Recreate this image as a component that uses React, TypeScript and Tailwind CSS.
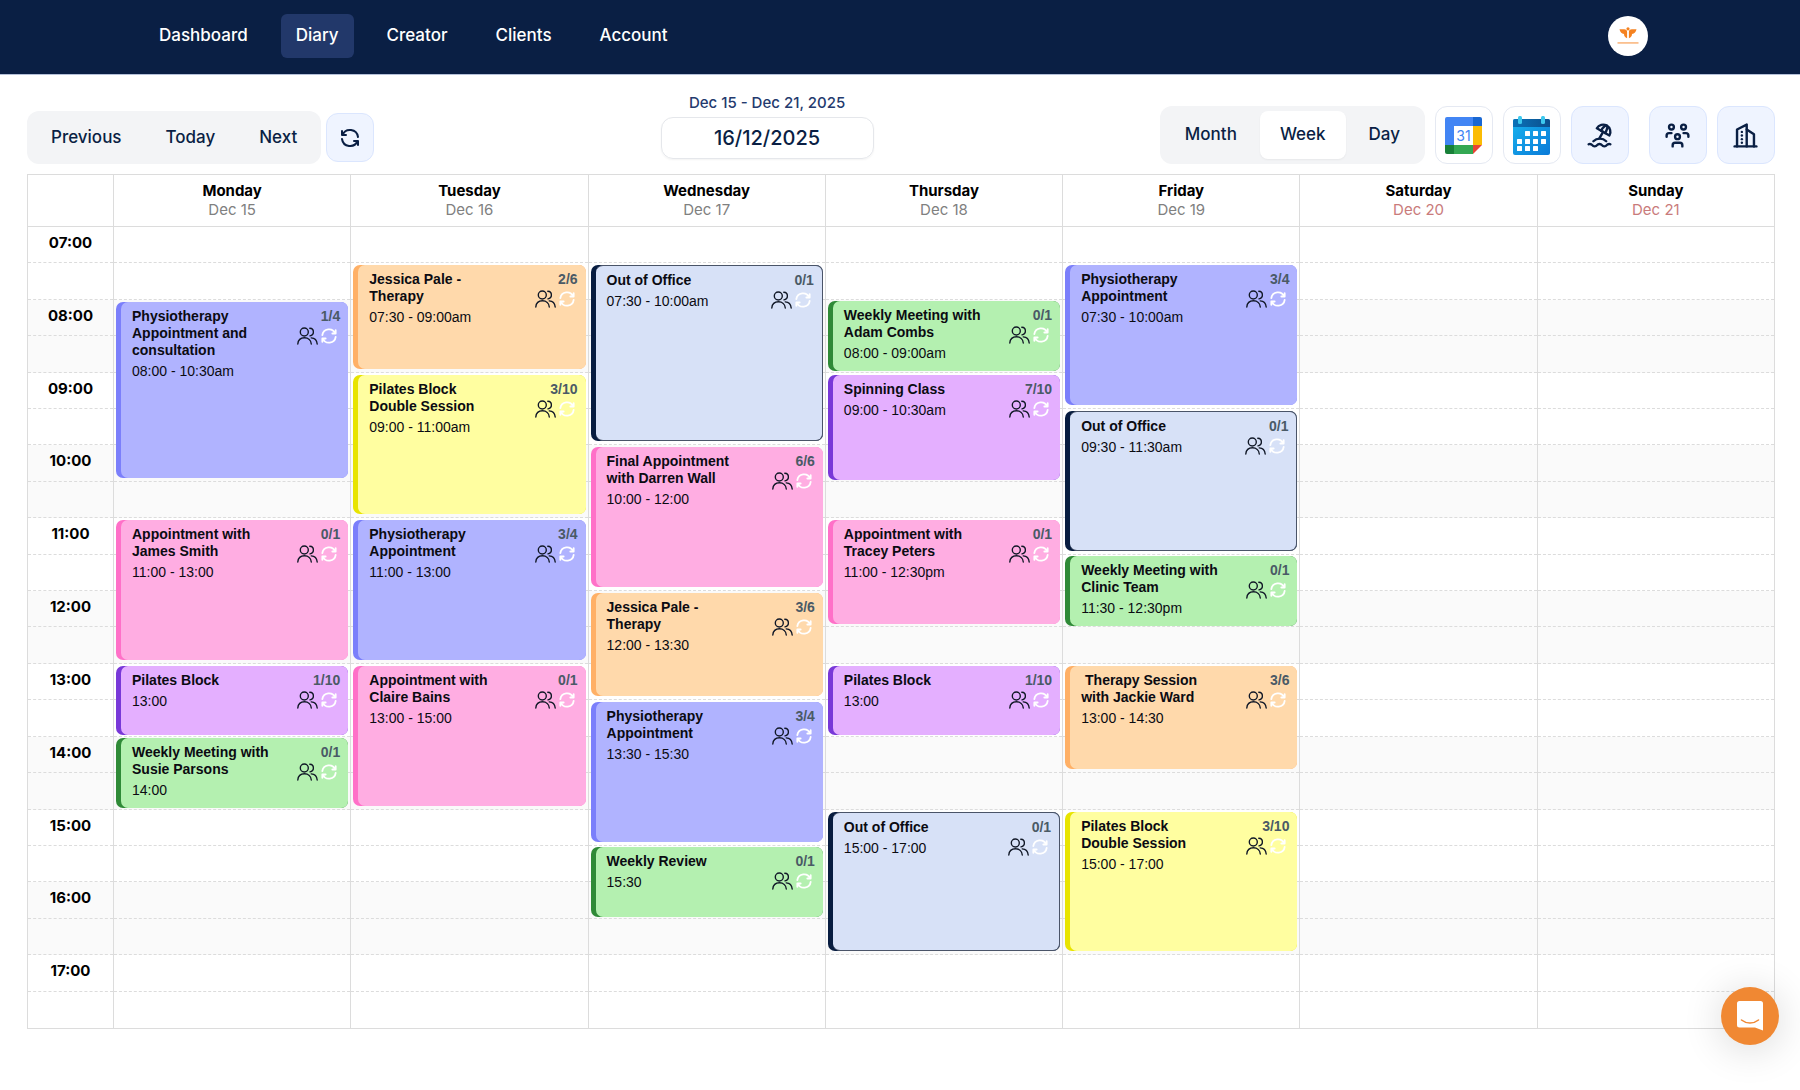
import { TbBeach, TbBuildingSkyscraper, TbRefresh, TbUsersGroup } from "react-icons/tb";

const navLinks = ["Dashboard", "Diary", "Creator", "Clients", "Account"];
const views = ["Month", "Week", "Day"];

const FIRST_HOUR = 7;
const hours = Array.from({ length: 11 }, (_, i) => FIRST_HOUR + i);

const tones = {
  violet: { strip: "bg-[#7b7ffb]", body: "bg-[#b0b3ff]", gap: "mt-0.5 mb-1" },
  orange: { strip: "bg-[#ffb066]", body: "bg-[#ffd9ab]", gap: "mt-0.5 mb-1" },
  yellow: { strip: "bg-[#e8e400]", body: "bg-[#fffea0]", gap: "mt-0.5 mb-1" },
  pink: { strip: "bg-[#ff70c8]", body: "bg-[#ffade2]", gap: "mt-0.5 mb-1" },
  purple: { strip: "bg-[#7838d8]", body: "bg-[#e4afff]", gap: "mt-0.5 mb-0.5" },
  green: { strip: "bg-[#2f8a37]", body: "bg-[#b4f0b0]", gap: "mt-px mb-0.5" },
  office: { strip: "bg-[#071c40]", body: "bg-[#d7e1f7] border border-l-0 border-[#4a5468] rounded-r-[7px]", gap: "mt-0.5 mb-1" },
};

type Booking = {
  title: string;
  time: string;
  count: string;
  start: number;
  end: number;
  tone: keyof typeof tones;
};

type Day = { name: string; date: string; weekend?: boolean; bookings: Booking[] };

const days: Day[] = [
  {
    name: "Monday",
    date: "Dec 15",
    bookings: [
      { title: "Physiotherapy\nAppointment and\nconsultation", time: "08:00 - 10:30am", count: "1/4", start: 8, end: 10.5, tone: "violet" },
      { title: "Appointment with\nJames Smith", time: "11:00 - 13:00", count: "0/1", start: 11, end: 13, tone: "pink" },
      { title: "Pilates Block", time: "13:00", count: "1/10", start: 13, end: 14, tone: "purple" },
      { title: "Weekly Meeting with\nSusie Parsons", time: "14:00", count: "0/1", start: 14, end: 15, tone: "green" },
    ],
  },
  {
    name: "Tuesday",
    date: "Dec 16",
    bookings: [
      { title: "Jessica Pale -\nTherapy", time: "07:30 - 09:00am", count: "2/6", start: 7.5, end: 9, tone: "orange" },
      { title: "Pilates Block\nDouble Session", time: "09:00 - 11:00am", count: "3/10", start: 9, end: 11, tone: "yellow" },
      { title: "Physiotherapy\nAppointment", time: "11:00 - 13:00", count: "3/4", start: 11, end: 13, tone: "violet" },
      { title: "Appointment with\nClaire Bains", time: "13:00 - 15:00", count: "0/1", start: 13, end: 15, tone: "pink" },
    ],
  },
  {
    name: "Wednesday",
    date: "Dec 17",
    bookings: [
      { title: "Out of Office", time: "07:30 - 10:00am", count: "0/1", start: 7.5, end: 10, tone: "office" },
      { title: "Final Appointment\nwith Darren Wall", time: "10:00 - 12:00", count: "6/6", start: 10, end: 12, tone: "pink" },
      { title: "Jessica Pale -\nTherapy", time: "12:00 - 13:30", count: "3/6", start: 12, end: 13.5, tone: "orange" },
      { title: "Physiotherapy\nAppointment", time: "13:30 - 15:30", count: "3/4", start: 13.5, end: 15.5, tone: "violet" },
      { title: "Weekly Review", time: "15:30", count: "0/1", start: 15.5, end: 16.5, tone: "green" },
    ],
  },
  {
    name: "Thursday",
    date: "Dec 18",
    bookings: [
      { title: "Weekly Meeting with\nAdam Combs", time: "08:00 - 09:00am", count: "0/1", start: 8, end: 9, tone: "green" },
      { title: "Spinning Class", time: "09:00 - 10:30am", count: "7/10", start: 9, end: 10.5, tone: "purple" },
      { title: "Appointment with\nTracey Peters", time: "11:00 - 12:30pm", count: "0/1", start: 11, end: 12.5, tone: "pink" },
      { title: "Pilates Block", time: "13:00", count: "1/10", start: 13, end: 14, tone: "purple" },
      { title: "Out of Office", time: "15:00 - 17:00", count: "0/1", start: 15, end: 17, tone: "office" },
    ],
  },
  {
    name: "Friday",
    date: "Dec 19",
    bookings: [
      { title: "Physiotherapy\nAppointment", time: "07:30 - 10:00am", count: "3/4", start: 7.5, end: 9.5, tone: "violet" },
      { title: "Out of Office", time: "09:30 - 11:30am", count: "0/1", start: 9.5, end: 11.5, tone: "office" },
      { title: "Weekly Meeting with\nClinic Team", time: "11:30 - 12:30pm", count: "0/1", start: 11.5, end: 12.5, tone: "green" },
      { title: "\u00a0Therapy Session\nwith Jackie Ward", time: "13:00 - 14:30", count: "3/6", start: 13, end: 14.5, tone: "orange" },
      { title: "Pilates Block\nDouble Session", time: "15:00 - 17:00", count: "3/10", start: 15, end: 17, tone: "yellow" },
    ],
  },
  { name: "Saturday", date: "Dec 20", weekend: true, bookings: [] },
  { name: "Sunday", date: "Dec 21", weekend: true, bookings: [] },
];

const slotRow = (time: number) => (time - FIRST_HOUR) * 2 + 1;

function AttendeesIcon() {
  return (
    <svg width="21" height="18" viewBox="0 0 21 18" fill="none" stroke="#111827" strokeWidth="1.4" strokeLinecap="round">
      <circle cx="7.3" cy="5" r="4" />
      <path d="M.8 17c.3-3.8 3-6.2 6.7-6.2s6.5 2.4 6.8 6.2" />
      <path d="M12.8 1.2c2 .1 3.6 1.8 3.6 3.8s-1.5 3.5-3.4 3.9" />
      <path d="M14.2 10.9c3.4.2 5.7 2.6 6 6.1" />
    </svg>
  );
}

function RepeatIcon() {
  return (
    <svg width="20" height="20" viewBox="0 0 24 24" fill="none" stroke="white" strokeWidth="2.2" strokeLinecap="round" strokeLinejoin="round">
      <path d="M4 11a8.1 8.1 0 0 1 15.5 -2m.5 -4v4h-4" />
      <path d="M20 13a8.1 8.1 0 0 1 -15.5 2m-.5 4v-4h4" />
    </svg>
  );
}

function GoogleCalendarIcon() {
  return (
    <svg width="37" height="37" viewBox="0 0 37 37">
      <path d="M2 0h26v9H9v19H0V2a2 2 0 0 1 2-2z" fill="#4285f4" />
      <path d="M28 0h7a2 2 0 0 1 2 2v7h-9z" fill="#1967d2" />
      <path d="M28 9h9v19h-9z" fill="#fbbc04" />
      <path d="M9 28h19v9H9z" fill="#34a853" />
      <path d="M0 28h9v9H2a2 2 0 0 1-2-2z" fill="#188038" />
      <path d="M28 28h9l-9 9z" fill="#ea4335" />
      <path d="M9 9h19v19H9z" fill="white" />
      <text x="18.5" y="24" textAnchor="middle" className="font-['Inter',sans-serif] text-sm" fill="#4285f4">
        31
      </text>
    </svg>
  );
}

function BlueCalendarIcon() {
  const cells = [
    [13, 15], [21, 15], [29, 15],
    [5, 23], [13, 23], [21, 23], [29, 23],
    [5, 30], [13, 30], [21, 30],
  ];
  return (
    <svg width="37" height="39" viewBox="0 0 37 39">
      <defs>
        <linearGradient id="page" x1="0" y1="0" x2="1" y2="1">
          <stop offset="0" stopColor="#19b4ee" />
          <stop offset="1" stopColor="#0a7ad8" />
        </linearGradient>
        <linearGradient id="band" x1="0" y1="0" x2="1" y2="0">
          <stop offset="0" stopColor="#0a72b8" />
          <stop offset="1" stopColor="#0b4f8e" />
        </linearGradient>
      </defs>
      <rect y="3" width="37" height="36" rx="2" fill="url(#page)" />
      <path d="M2 3h33a2 2 0 0 1 2 2v6H0V5a2 2 0 0 1 2-2z" fill="url(#band)" />
      <rect x="5" width="4" height="8" rx="1.5" fill="#3cc8ee" />
      <rect x="28" width="4" height="8" rx="1.5" fill="#3cc8ee" />
      {cells.map(([x, y]) => (
        <rect key={`${x}-${y}`} x={x - 1} y={y} width="5" height="5" rx=".5" fill="white" />
      ))}
    </svg>
  );
}

function AvatarLogo() {
  return (
    <svg width="22" height="18" viewBox="0 0 22 18" fill="#f58220">
      <circle cx="11" cy="1.8" r="1.6" />
      <path d="M2.5 2.3h4.6c1.900 0 3 1 3 2.700v6.200C8 10.400 7 8.900 7 6.900 4.500 6.600 3 5.100 2.500 2.300z" />
      <path d="M19.5 2.3h-4.6c-1.900 0-3 1-3 2.700v6.200c2.100-.8 3.100-2.300 3.100-4.300 2.500-.3 4-1.800 4.500-4.600z" />
      <path d="M.5 15h21v1.800H.5z" opacity=".5" />
    </svg>
  );
}

function BookingCard({ booking }: { booking: Booking }) {
  const tone = tones[booking.tone];
  return (
    <article
      className={`col-start-1 z-10 mx-0.5 pl-[5px] rounded-[7px] overflow-hidden ${tone.strip} ${tone.gap}`}
      style={{ gridRow: `${slotRow(booking.start)} / ${slotRow(booking.end)}` }}
    >
      <div className={`h-full flex justify-between rounded-l-[7px] pt-1.5 pl-[11px] pr-2 leading-[17px] text-sm ${tone.body}`}>
        <div>
          <h3 className="font-bold whitespace-pre-line text-[#0b0b12]">{booking.title}</h3>
          <p className="mt-1 text-[#0b0b12]">{booking.time}</p>
        </div>
        <div className="flex flex-col items-end">
          <span className="font-bold text-[#4a5a66]">{booking.count}</span>
          <div className="flex items-center gap-px pt-px pr-px">
            <AttendeesIcon />
            <RepeatIcon />
          </div>
        </div>
      </div>
    </article>
  );
}

export default function App() {
  return (
    <div className="min-h-screen bg-white font-['Inter',sans-serif] text-[#0a1f44]">
      <header className="h-[75px] pb-[3px] pl-36 pr-[152px] flex items-center justify-between bg-[#0a1f44] border-b border-[#b4c0d8]">
        <nav className="flex gap-[18px]">
          {navLinks.map((link) => (
            <a
              key={link}
              href="#"
              className={`h-11 px-[15px] flex items-center rounded-md text-[17px] font-medium text-white ${
                link === "Diary" ? "bg-[#22386a]" : ""
              }`}
            >
              {link}
            </a>
          ))}
        </nav>
        <button aria-label="Profile" className="w-10 h-10 rounded-full bg-white flex items-center justify-center">
          <AvatarLogo />
        </button>
      </header>

      <main className="pl-[27px] pr-[25px] pt-[18px]">
        {/* Toolbar */}
        <div className="flex items-end justify-between pb-2.5">
          <div className="flex items-center gap-[5px]">
            <div className="flex gap-1 p-1 rounded-xl bg-[#f3f4f6]">
              {["Previous", "Today", "Next"].map((label) => (
                <button key={label} className="h-[45px] px-5 rounded-lg text-[17px] font-medium">
                  {label}
                </button>
              ))}
            </div>
            <button aria-label="Refresh" className="w-12 h-[49px] flex items-center justify-center rounded-xl border border-[#dbe6fe] bg-[#eff4ff]">
              <TbRefresh size={24} />
            </button>
          </div>

          <div className="flex flex-col items-center pb-[5px]">
            <label htmlFor="date" className="mb-1 leading-5 text-[15px] font-medium text-[#243a6e]">
              Dec 15 - Dec 21, 2025
            </label>
            <input
              id="date"
              type="text"
              defaultValue="16/12/2025"
              className="w-[213px] h-[42px] rounded-xl border border-[#e5e7eb] shadow-xs text-center text-xl font-medium"
            />
          </div>

          <div className="flex gap-2.5">
            <div className="flex gap-[3px] p-[5px] rounded-xl bg-[#f3f4f6]">
              {views.map((view) => (
                <button
                  key={view}
                  className={`h-12 px-5 rounded-lg text-[17px] font-medium ${view === "Week" ? "bg-white shadow-xs" : ""}`}
                >
                  {view}
                </button>
              ))}
            </div>
            <button aria-label="Google Calendar" className="w-[58px] h-[58px] flex items-center justify-center rounded-xl border border-[#e5e9f2] bg-white">
              <GoogleCalendarIcon />
            </button>
            <button aria-label="Calendar sync" className="w-[58px] h-[58px] flex items-center justify-center rounded-xl border border-[#e5e9f2] bg-white">
              <BlueCalendarIcon />
            </button>
            <button aria-label="Time off" className="w-[58px] h-[58px] flex items-center justify-center rounded-xl border border-[#dbe6fe] bg-[#eff4ff]">
              <TbBeach size={29} />
            </button>
            <div className="flex gap-2.5 pl-2.5">
              <button aria-label="Team" className="w-[58px] h-[58px] flex items-center justify-center rounded-xl border border-[#dbe6fe] bg-[#eff4ff]">
                <TbUsersGroup size={29} />
              </button>
              <button aria-label="Locations" className="w-[58px] h-[58px] flex items-center justify-center rounded-xl border border-[#dbe6fe] bg-[#eff4ff]">
                <TbBuildingSkyscraper size={29} />
              </button>
            </div>
          </div>
        </div>

        {/* Week grid */}
        <div className="border-t border-r border-b border-[#dcdcdc]">
          <div className="grid grid-cols-[86px_repeat(7,minmax(0,1fr))] border-b border-[#dcdcdc]">
            <div className="border-l border-[#dcdcdc]" />
            {days.map((day) => (
              <div key={day.name} className="h-[51px] pt-1.5 border-l border-[#dcdcdc] text-center text-[15px] leading-[19px]">
                <div className="font-bold text-black">{day.name}</div>
                <div className={day.weekend ? "text-[#c97b7b]" : "text-[#808080]"}>{day.date}</div>
              </div>
            ))}
          </div>

          <div className="grid grid-cols-[86px_repeat(7,minmax(0,1fr))] h-[801px]">
            <div className="grid grid-rows-[repeat(22,minmax(0,1fr))] border-l border-[#dcdcdc]">
              {hours.map((hour) => (
                <div key={hour} className={`row-span-2 grid grid-rows-2 ${hour % 2 ? "bg-white" : "bg-[#fafafa]"}`}>
                  <div className="pt-1.5 border-b border-dashed border-[#dcdcdc] text-center text-[15px] leading-[19px] font-bold text-black">
                    {String(hour).padStart(2, "0")}:00
                  </div>
                  <div className={hour === 17 ? "" : "border-b border-dashed border-[#dcdcdc]"} />
                </div>
              ))}
            </div>
            {days.map((day) => (
              <div
                key={day.name}
                className="grid grid-rows-[repeat(22,minmax(0,1fr))] border-l border-[#dcdcdc] font-['Liberation_Sans',Arial,sans-serif]"
              >
                {hours.map((hour) => (
                  <div
                    key={hour}
                    className={`col-start-1 grid grid-rows-2 ${hour % 2 ? "bg-white" : "bg-[#fafafa]"}`}
                    style={{ gridRow: `${slotRow(hour)} / span 2` }}
                  >
                    <div className="border-b border-dashed border-[#dcdcdc]" />
                    <div className={hour === 17 ? "" : "border-b border-dashed border-[#dcdcdc]"} />
                  </div>
                ))}
                {day.bookings.map((booking) => (
                  <BookingCard key={booking.start} booking={booking} />
                ))}
              </div>
            ))}
          </div>
        </div>
      </main>

      <button
        aria-label="Open chat"
        className="fixed right-[21px] bottom-[45px] z-20 w-[58px] h-[58px] rounded-full bg-[#f08833] flex items-center justify-center shadow-[0_4px_40px_rgba(0,0,0,0.16)]"
      >
        <svg width="26" height="30" viewBox="0 0 26 30" fill="none">
          <path d="M2.5 0h21A2.5 2.5 0 0 1 26 2.5V29.5L18 26.5H2.5A2.5 2.5 0 0 1 0 24V2.5A2.5 2.5 0 0 1 2.5 0z" fill="white" />
          <path d="M4.5 19c5 4 12 4 17 0" stroke="#f08833" strokeWidth="1.6" strokeLinecap="round" />
        </svg>
      </button>
    </div>
  );
}
